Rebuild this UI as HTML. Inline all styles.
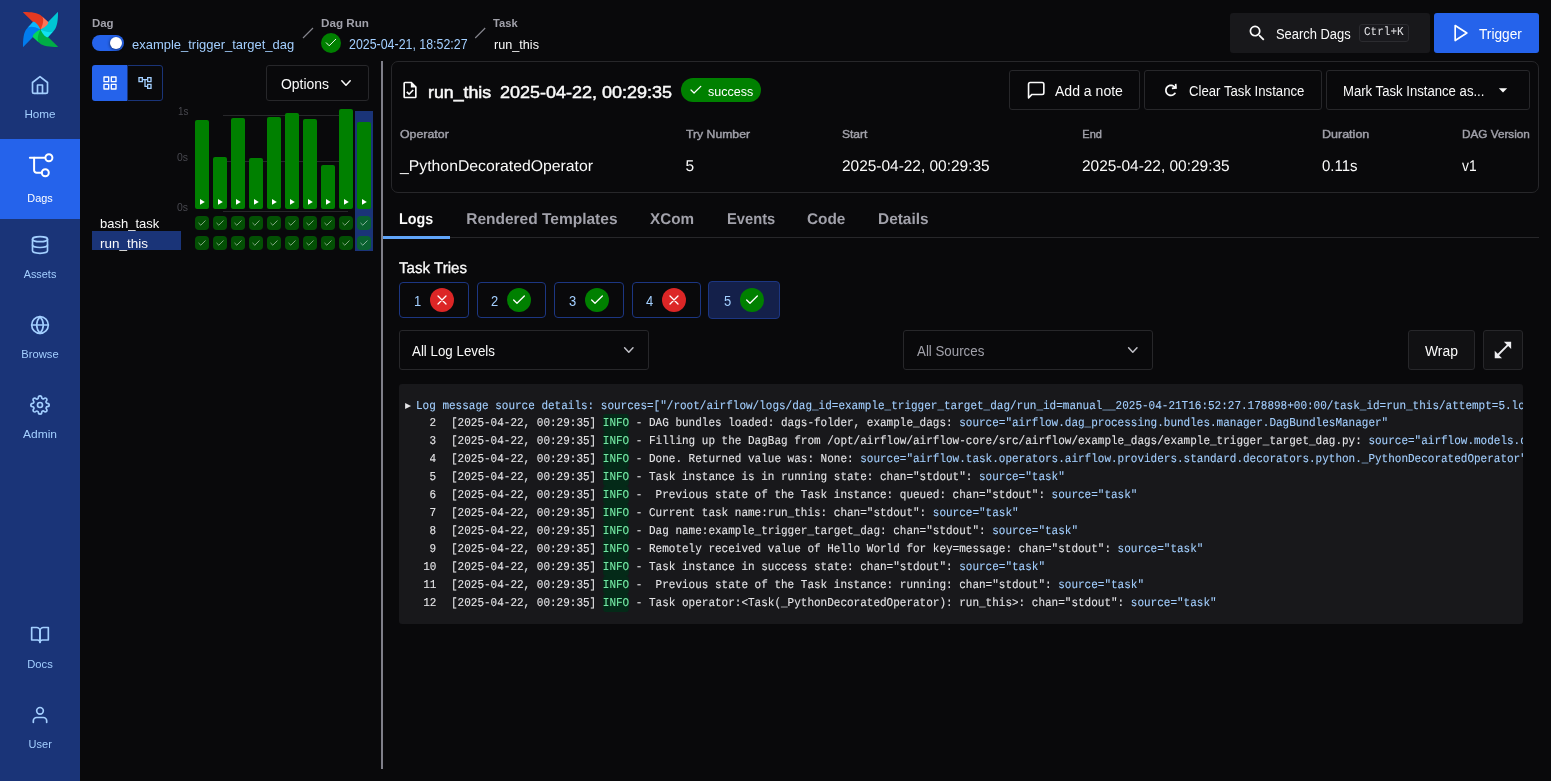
<!DOCTYPE html>
<html><head><meta charset="utf-8"><title>run_this - Airflow</title>
<style>
html,body{margin:0;padding:0;background:#09090b;}
body{width:1551px;height:781px;overflow:hidden;position:relative;font-family:"Liberation Sans",sans-serif;}
.t{position:absolute;white-space:pre;line-height:1;font-family:"Liberation Sans",sans-serif;}
.b{position:absolute;box-sizing:border-box;}
svg{overflow:visible;}
.ic{fill:none;stroke:currentColor;stroke-width:2;stroke-linecap:round;stroke-linejoin:round;}
</style></head><body><div id="w" style="position:absolute;left:0;top:0;width:1551px;height:781px;will-change:transform;">

<div class="b" style="left:0px;top:0px;width:80px;height:781px;background:#1a3478;"></div>
<div class="b" style="left:0px;top:139px;width:80px;height:80px;background:#2563eb;"></div>
<svg class="b" style="left:23px;top:12px;" width="35" height="35" viewBox="0 0 155.314 155.314"><path d="M1.936 154.575l74.924-76.8a1.374 1.374 0 00.171-1.754c-4.556-6.361-12.963-7.464-16.079-11.738-9.229-12.66-11.571-19.826-15.537-19.382a1.218 1.218 0 00-.728.385L17.621 73.03C2.05 88.981-.185 124.1.008 153.729a1.122 1.122 0 001.928.846z" fill="#017cee"/>
<path d="M154.566 153.37l-76.8-74.925a1.372 1.372 0 00-1.754-.171c-6.361 4.557-7.464 12.963-11.738 16.079-12.66 9.229-19.826 11.571-19.382 15.537a1.223 1.223 0 00.385.727l27.744 27.066c15.951 15.571 51.07 17.806 80.7 17.613a1.122 1.122 0 00.845-1.926z" fill="#00ad46"/>
<path d="M73.02 137.684c-8.718-8.506-12.757-25.331 4.636-60.029-28.275 12.637-38.183 29.456-33.31 34.211z" fill="#04d659"/>
<path d="M153.369.74L78.447 77.536a1.371 1.371 0 00-.171 1.754c4.557 6.361 12.962 7.464 16.078 11.738 9.229 12.66 11.573 19.826 15.537 19.382a1.216 1.216 0 00.728-.385l27.066-27.744c15.571-15.951 17.806-51.07 17.613-80.7a1.123 1.123 0 00-1.929-.841z" fill="#00c7d4"/>
<path d="M137.685 82.284c-8.506 8.718-25.331 12.757-60.03-4.636 12.637 28.275 29.456 38.183 34.212 33.31z" fill="#11e1ee"/>
<path d="M.741 1.937l76.8 74.922a1.373 1.373 0 001.754.171c6.361-4.557 7.464-12.963 11.738-16.079 12.66-9.229 19.826-11.571 19.382-15.537a1.221 1.221 0 00-.385-.727L82.286 17.621C66.335 2.05 31.216-.185 1.586.008a1.122 1.122 0 00-.845 1.929z" fill="#e43921"/>
<path d="M82.287 17.622c8.718 8.506 12.757 25.331-4.636 60.029 28.275-12.637 38.183-29.457 33.31-34.212z" fill="#ff7557"/>
<path d="M17.62 73.022c8.506-8.718 25.331-12.757 60.029 4.636-12.637-28.275-29.456-38.183-34.211-33.31z" fill="#0cb6ff"/>
<circle cx="77.657" cy="77.655" r="1.365" fill="#4a4848"/></svg>
<svg class="b" style="left:30px;top:75px;color:#a3cfff;" width="20" height="20" viewBox="0 0 24 24"><g class="ic"><path d="M3 9l9-7 9 7v11a2 2 0 0 1-2 2H5a2 2 0 0 1-2-2z"/><polyline points="9 22 9 12 15 12 15 22"/></g></svg>
<span class="t" style="top:109px;font-size:11px;color:#a3cfff;left:-59.80px;width:200px;text-align:center;transform:scale(1.0633,1);transform-origin:50% 9px;">Home</span>
<svg class="b" style="left:0;top:0;color:#fff;" width="1551" height="781" viewBox="0 0 1551 781"><g class="ic" style="stroke-width:2"><path d="M29.9 157.8H44.4"/><circle cx="48.9" cy="157.8" r="3.5"/><path d="M34.1 157.8V170.2a2.5 2.5 0 0 0 2.5 2.5H41.8"/><circle cx="45.3" cy="172.7" r="3.5"/></g></svg>
<span class="t" style="top:193px;font-size:11px;color:#fff;left:-59.80px;width:200px;text-align:center;transform:scale(0.9891,1);transform-origin:50% 9px;">Dags</span>
<svg class="b" style="left:30px;top:235px;color:#a3cfff;" width="20" height="20" viewBox="0 0 24 24"><g class="ic"><ellipse cx="12" cy="5" rx="9" ry="3"/><path d="M21 12c0 1.66-4 3-9 3s-9-1.34-9-3"/><path d="M3 5v14c0 1.66 4 3 9 3s9-1.34 9-3V5"/></g></svg>
<span class="t" style="top:269px;font-size:11px;color:#a3cfff;left:-59.80px;width:200px;text-align:center;transform:scale(0.9906,1);transform-origin:50% 9px;">Assets</span>
<svg class="b" style="left:30px;top:315px;color:#a3cfff;" width="20" height="20" viewBox="0 0 24 24"><g class="ic"><circle cx="12" cy="12" r="10"/><line x1="2" y1="12" x2="22" y2="12"/><path d="M12 2a15.3 15.3 0 0 1 4 10 15.3 15.3 0 0 1-4 10 15.3 15.3 0 0 1-4-10 15.3 15.3 0 0 1 4-10z"/></g></svg>
<span class="t" style="top:349px;font-size:11px;color:#a3cfff;left:-59.80px;width:200px;text-align:center;transform:scale(1.0169,1);transform-origin:50% 9px;">Browse</span>
<svg class="b" style="left:30px;top:395px;color:#a3cfff;" width="20" height="20" viewBox="0 0 24 24"><g class="ic"><circle cx="12" cy="12" r="3"/><path d="M19.4 15a1.65 1.65 0 0 0 .33 1.82l.06.06a2 2 0 0 1 0 2.83 2 2 0 0 1-2.83 0l-.06-.06a1.65 1.65 0 0 0-1.82-.33 1.65 1.65 0 0 0-1 1.51V21a2 2 0 0 1-2 2 2 2 0 0 1-2-2v-.09A1.65 1.65 0 0 0 9 19.4a1.65 1.65 0 0 0-1.82.33l-.06.06a2 2 0 0 1-2.83 0 2 2 0 0 1 0-2.83l.06-.06a1.65 1.65 0 0 0 .33-1.82 1.65 1.65 0 0 0-1.51-1H3a2 2 0 0 1-2-2 2 2 0 0 1 2-2h.09A1.65 1.65 0 0 0 4.6 9a1.65 1.65 0 0 0-.33-1.82l-.06-.06a2 2 0 0 1 0-2.83 2 2 0 0 1 2.83 0l.06.06a1.65 1.65 0 0 0 1.82.33H9a1.65 1.65 0 0 0 1-1.51V3a2 2 0 0 1 2-2 2 2 0 0 1 2 2v.09a1.65 1.65 0 0 0 1 1.51 1.65 1.65 0 0 0 1.82-.33l.06-.06a2 2 0 0 1 2.83 0 2 2 0 0 1 0 2.83l-.06.06a1.65 1.65 0 0 0-.33 1.82V9a1.65 1.65 0 0 0 1.51 1H21a2 2 0 0 1 2 2 2 2 0 0 1-2 2h-.09a1.65 1.65 0 0 0-1.51 1z"/></g></svg>
<span class="t" style="top:429px;font-size:11px;color:#a3cfff;left:-59.80px;width:200px;text-align:center;transform:scale(1.0905,1);transform-origin:50% 9px;">Admin</span>
<svg class="b" style="left:30px;top:625px;color:#a3cfff;" width="20" height="20" viewBox="0 0 24 24"><g class="ic"><path d="M2 3h6a4 4 0 0 1 4 4v14a3 3 0 0 0-3-3H2z"/><path d="M22 3h-6a4 4 0 0 0-4 4v14a3 3 0 0 1 3-3h7z"/></g></svg>
<span class="t" style="top:659px;font-size:11px;color:#a3cfff;left:-59.80px;width:200px;text-align:center;transform:scale(1.0175,1);transform-origin:50% 9px;">Docs</span>
<svg class="b" style="left:30px;top:705px;color:#a3cfff;" width="20" height="20" viewBox="0 0 24 24"><g class="ic"><path d="M20 21v-2a4 4 0 0 0-4-4H8a4 4 0 0 0-4 4v2"/><circle cx="12" cy="7" r="4"/></g></svg>
<span class="t" style="top:739px;font-size:11px;color:#a3cfff;left:-59.80px;width:200px;text-align:center;">User</span>
<span class="t" style="top:18px;font-size:11px;color:#a1a1aa;left:92.20px;transform:scale(1.0394,1);transform-origin:0 9px;font-weight:700;">Dag</span>
<div class="b" style="left:92px;top:35px;width:32px;height:16px;background:#2563eb;border-radius:8px;"></div>
<div class="b" style="left:110px;top:37px;width:12px;height:12px;background:#fff;border-radius:6px;box-shadow:0 1px 3px rgba(0,0,0,0.4),-1px 0 3px rgba(0,0,0,0.2);"></div>
<span class="t" style="top:38px;font-size:13.5px;color:#a3cfff;left:132.40px;transform:scale(0.9605,1);transform-origin:0 11px;">example_trigger_target_dag</span>
<svg class="b" style="left:0;top:0;" width="1551" height="781" viewBox="0 0 1551 781"><path d="M303 38L313 28M475.2 38L485.2 28" stroke="#85858d" stroke-width="1.15" fill="none"/></svg>
<span class="t" style="top:18px;font-size:11px;color:#a1a1aa;left:320.50px;transform:scale(1.0615,1);transform-origin:0 9px;font-weight:700;">Dag Run</span>
<div class="b" style="left:321px;top:33px;width:20px;height:20px;background:#008000;border-radius:10px;"></div>
<svg class="b" style="left:0;top:0;" width="1551" height="781" viewBox="0 0 1551 781"><polyline points="335.72,39.26 329.23,45.75 326.28,42.80" fill="none" stroke="rgba(255,255,255,0.95)" stroke-width="1.0" stroke-linecap="round" stroke-linejoin="round"/></svg>
<span class="t" style="top:37px;font-size:14px;color:#a3cfff;left:348.60px;transform:scale(0.8858,1);transform-origin:0 12px;">2025-04-21, 18:52:27</span>
<span class="t" style="top:18px;font-size:11px;color:#a1a1aa;left:493.40px;transform:scale(1.0142,1);transform-origin:0 9px;font-weight:700;">Task</span>
<span class="t" style="top:38px;font-size:13.5px;color:#fafafa;left:493.70px;transform:scale(0.9370,1);transform-origin:0 11px;">run_this</span>
<div class="b" style="left:1230px;top:13px;width:200px;height:40px;background:#18181b;border-radius:3px;"></div>
<svg class="b" style="left:1246.55px;top:22.65px;color:#fafafa;" width="20.4" height="20.4" viewBox="0 0 24 24"><path fill="currentColor" d="M15.5 14h-.79l-.28-.27A6.471 6.471 0 0 0 16 9.5 6.5 6.5 0 1 0 9.5 16c1.61 0 3.09-.59 4.23-1.57l.27.28v.79l5 4.99L20.49 19l-4.99-5zm-6 0C7.01 14 5 11.99 5 9.5S7.01 5 9.5 5 14 7.01 14 9.5 11.99 14 9.5 14z"/></svg>
<span class="t" style="top:27px;font-size:14px;color:#fafafa;left:1275.60px;transform:scale(0.9230,1);transform-origin:0 12px;">Search Dags</span>
<div class="b" style="left:1359px;top:24px;width:50px;height:18px;border:1px solid #2c2c30;border-radius:3px;background:#1a1a1e;"></div>
<span class="t" style="top:26px;font-size:12px;color:#e4e4e7;left:1364.00px;transform:scale(0.9165,1);transform-origin:0 9px;font-family:'Liberation Mono',monospace;text-rendering:geometricPrecision;">Ctrl+K</span>
<div class="b" style="left:1434px;top:13px;width:105px;height:40px;background:#2563eb;border-radius:3px;"></div>
<svg class="b" style="left:1450.5px;top:23.1px;color:#fff;" width="20" height="20" viewBox="0 0 24 24"><polygon class="ic" points="5 3 19 12 5 21 5 3"/></svg>
<span class="t" style="top:27px;font-size:14px;color:#fff;left:1479.10px;transform:scale(0.9766,1);transform-origin:0 12px;">Trigger</span>
<div class="b" style="left:92px;top:65px;width:35px;height:36px;background:#2563eb;border-radius:3px 0 0 3px;"></div>
<div class="b" style="left:127px;top:65px;width:36px;height:36px;border:1px solid #1a3478;border-radius:0 3px 3px 0;"></div>
<svg class="b" style="left:102px;top:75px;color:#fff;" width="16" height="16" viewBox="0 0 24 24"><g class="ic"><rect x="3" y="3" width="7" height="7"/><rect x="14" y="3" width="7" height="7"/><rect x="14" y="14" width="7" height="7"/><rect x="3" y="14" width="7" height="7"/></g></svg>
<svg class="b" style="left:137.2px;top:75px;color:#a3cfff;" width="16" height="16" viewBox="0 0 24 24"><path fill="currentColor" d="M22 11V3h-7v3H9V3H2v8h7V8h2v10h4v3h7v-8h-7v3h-2V8h2v3h7zM7 9H4V5h3v4zm10 6h3v4h-3v-4zm0-10h3v4h-3V5z"/></svg>
<div class="b" style="left:266px;top:65px;width:103px;height:36px;border:1px solid #27272a;border-radius:3px;"></div>
<span class="t" style="top:77px;font-size:14px;color:#fafafa;left:281.30px;transform:scale(0.9969,1);transform-origin:0 12px;">Options</span>
<svg class="b" style="left:0;top:0;color:#fafafa;" width="1551" height="781" viewBox="0 0 1551 781"><polyline class="ic" points="341.8 80.7 346 85.2 350.2 80.7" style="stroke-width:1.5"/></svg>
<span class="t" style="top:107px;font-size:10px;color:#48484f;left:177.70px;transform:scale(0.9942,1);transform-origin:0 8px;">1s</span>
<span class="t" style="top:153px;font-size:10px;color:#48484f;left:176.90px;transform:scale(1.0415,1);transform-origin:0 8px;">0s</span>
<span class="t" style="top:203px;font-size:10px;color:#48484f;left:176.90px;transform:scale(1.0415,1);transform-origin:0 8px;">0s</span>
<div class="b" style="left:223px;top:115px;width:125px;height:1px;background:#27272a;"></div>
<div class="b" style="left:223px;top:161px;width:125px;height:1px;background:#27272a;"></div>
<div class="b" style="left:223px;top:211px;width:125px;height:1px;background:#27272a;"></div>
<div class="b" style="left:355px;top:111px;width:18px;height:140px;background:#1a3478;"></div>
<div class="b" style="left:195px;top:120px;width:14px;height:89px;background:#008000;border-radius:2px;"></div>
<svg class="b" style="left:199.9px;top:199.3px;" width="4.8" height="5.8" viewBox="0 0 5 6"><path d="M0 0L5 3L0 6z" fill="#fff"/></svg>
<div class="b" style="left:195px;top:216px;width:14px;height:14px;background:rgba(0,128,0,0.6);border-radius:4px;"></div>
<svg class="b" style="left:0;top:0;" width="1551" height="781" viewBox="0 0 1551 781"><polyline points="205.20,220.80 200.80,225.20 198.80,223.20" fill="none" stroke="rgba(255,255,255,0.5)" stroke-width="1" stroke-linecap="round" stroke-linejoin="round"/></svg>
<div class="b" style="left:195px;top:236px;width:14px;height:14px;background:rgba(0,128,0,0.6);border-radius:4px;"></div>
<svg class="b" style="left:0;top:0;" width="1551" height="781" viewBox="0 0 1551 781"><polyline points="205.20,240.80 200.80,245.20 198.80,243.20" fill="none" stroke="rgba(255,255,255,0.5)" stroke-width="1" stroke-linecap="round" stroke-linejoin="round"/></svg>
<div class="b" style="left:213px;top:157px;width:14px;height:52px;background:#008000;border-radius:2px;"></div>
<svg class="b" style="left:217.9px;top:199.3px;" width="4.8" height="5.8" viewBox="0 0 5 6"><path d="M0 0L5 3L0 6z" fill="#fff"/></svg>
<div class="b" style="left:213px;top:216px;width:14px;height:14px;background:rgba(0,128,0,0.6);border-radius:4px;"></div>
<svg class="b" style="left:0;top:0;" width="1551" height="781" viewBox="0 0 1551 781"><polyline points="223.20,220.80 218.80,225.20 216.80,223.20" fill="none" stroke="rgba(255,255,255,0.5)" stroke-width="1" stroke-linecap="round" stroke-linejoin="round"/></svg>
<div class="b" style="left:213px;top:236px;width:14px;height:14px;background:rgba(0,128,0,0.6);border-radius:4px;"></div>
<svg class="b" style="left:0;top:0;" width="1551" height="781" viewBox="0 0 1551 781"><polyline points="223.20,240.80 218.80,245.20 216.80,243.20" fill="none" stroke="rgba(255,255,255,0.5)" stroke-width="1" stroke-linecap="round" stroke-linejoin="round"/></svg>
<div class="b" style="left:231px;top:118px;width:14px;height:91px;background:#008000;border-radius:2px;"></div>
<svg class="b" style="left:235.9px;top:199.3px;" width="4.8" height="5.8" viewBox="0 0 5 6"><path d="M0 0L5 3L0 6z" fill="#fff"/></svg>
<div class="b" style="left:231px;top:216px;width:14px;height:14px;background:rgba(0,128,0,0.6);border-radius:4px;"></div>
<svg class="b" style="left:0;top:0;" width="1551" height="781" viewBox="0 0 1551 781"><polyline points="241.20,220.80 236.80,225.20 234.80,223.20" fill="none" stroke="rgba(255,255,255,0.5)" stroke-width="1" stroke-linecap="round" stroke-linejoin="round"/></svg>
<div class="b" style="left:231px;top:236px;width:14px;height:14px;background:rgba(0,128,0,0.6);border-radius:4px;"></div>
<svg class="b" style="left:0;top:0;" width="1551" height="781" viewBox="0 0 1551 781"><polyline points="241.20,240.80 236.80,245.20 234.80,243.20" fill="none" stroke="rgba(255,255,255,0.5)" stroke-width="1" stroke-linecap="round" stroke-linejoin="round"/></svg>
<div class="b" style="left:249px;top:158px;width:14px;height:51px;background:#008000;border-radius:2px;"></div>
<svg class="b" style="left:253.9px;top:199.3px;" width="4.8" height="5.8" viewBox="0 0 5 6"><path d="M0 0L5 3L0 6z" fill="#fff"/></svg>
<div class="b" style="left:249px;top:216px;width:14px;height:14px;background:rgba(0,128,0,0.6);border-radius:4px;"></div>
<svg class="b" style="left:0;top:0;" width="1551" height="781" viewBox="0 0 1551 781"><polyline points="259.20,220.80 254.80,225.20 252.80,223.20" fill="none" stroke="rgba(255,255,255,0.5)" stroke-width="1" stroke-linecap="round" stroke-linejoin="round"/></svg>
<div class="b" style="left:249px;top:236px;width:14px;height:14px;background:rgba(0,128,0,0.6);border-radius:4px;"></div>
<svg class="b" style="left:0;top:0;" width="1551" height="781" viewBox="0 0 1551 781"><polyline points="259.20,240.80 254.80,245.20 252.80,243.20" fill="none" stroke="rgba(255,255,255,0.5)" stroke-width="1" stroke-linecap="round" stroke-linejoin="round"/></svg>
<div class="b" style="left:267px;top:117px;width:14px;height:92px;background:#008000;border-radius:2px;"></div>
<svg class="b" style="left:271.9px;top:199.3px;" width="4.8" height="5.8" viewBox="0 0 5 6"><path d="M0 0L5 3L0 6z" fill="#fff"/></svg>
<div class="b" style="left:267px;top:216px;width:14px;height:14px;background:rgba(0,128,0,0.6);border-radius:4px;"></div>
<svg class="b" style="left:0;top:0;" width="1551" height="781" viewBox="0 0 1551 781"><polyline points="277.20,220.80 272.80,225.20 270.80,223.20" fill="none" stroke="rgba(255,255,255,0.5)" stroke-width="1" stroke-linecap="round" stroke-linejoin="round"/></svg>
<div class="b" style="left:267px;top:236px;width:14px;height:14px;background:rgba(0,128,0,0.6);border-radius:4px;"></div>
<svg class="b" style="left:0;top:0;" width="1551" height="781" viewBox="0 0 1551 781"><polyline points="277.20,240.80 272.80,245.20 270.80,243.20" fill="none" stroke="rgba(255,255,255,0.5)" stroke-width="1" stroke-linecap="round" stroke-linejoin="round"/></svg>
<div class="b" style="left:285px;top:113px;width:14px;height:96px;background:#008000;border-radius:2px;"></div>
<svg class="b" style="left:289.9px;top:199.3px;" width="4.8" height="5.8" viewBox="0 0 5 6"><path d="M0 0L5 3L0 6z" fill="#fff"/></svg>
<div class="b" style="left:285px;top:216px;width:14px;height:14px;background:rgba(0,128,0,0.6);border-radius:4px;"></div>
<svg class="b" style="left:0;top:0;" width="1551" height="781" viewBox="0 0 1551 781"><polyline points="295.20,220.80 290.80,225.20 288.80,223.20" fill="none" stroke="rgba(255,255,255,0.5)" stroke-width="1" stroke-linecap="round" stroke-linejoin="round"/></svg>
<div class="b" style="left:285px;top:236px;width:14px;height:14px;background:rgba(0,128,0,0.6);border-radius:4px;"></div>
<svg class="b" style="left:0;top:0;" width="1551" height="781" viewBox="0 0 1551 781"><polyline points="295.20,240.80 290.80,245.20 288.80,243.20" fill="none" stroke="rgba(255,255,255,0.5)" stroke-width="1" stroke-linecap="round" stroke-linejoin="round"/></svg>
<div class="b" style="left:303px;top:119px;width:14px;height:90px;background:#008000;border-radius:2px;"></div>
<svg class="b" style="left:307.9px;top:199.3px;" width="4.8" height="5.8" viewBox="0 0 5 6"><path d="M0 0L5 3L0 6z" fill="#fff"/></svg>
<div class="b" style="left:303px;top:216px;width:14px;height:14px;background:rgba(0,128,0,0.6);border-radius:4px;"></div>
<svg class="b" style="left:0;top:0;" width="1551" height="781" viewBox="0 0 1551 781"><polyline points="313.20,220.80 308.80,225.20 306.80,223.20" fill="none" stroke="rgba(255,255,255,0.5)" stroke-width="1" stroke-linecap="round" stroke-linejoin="round"/></svg>
<div class="b" style="left:303px;top:236px;width:14px;height:14px;background:rgba(0,128,0,0.6);border-radius:4px;"></div>
<svg class="b" style="left:0;top:0;" width="1551" height="781" viewBox="0 0 1551 781"><polyline points="313.20,240.80 308.80,245.20 306.80,243.20" fill="none" stroke="rgba(255,255,255,0.5)" stroke-width="1" stroke-linecap="round" stroke-linejoin="round"/></svg>
<div class="b" style="left:321px;top:165px;width:14px;height:44px;background:#008000;border-radius:2px;"></div>
<svg class="b" style="left:325.9px;top:199.3px;" width="4.8" height="5.8" viewBox="0 0 5 6"><path d="M0 0L5 3L0 6z" fill="#fff"/></svg>
<div class="b" style="left:321px;top:216px;width:14px;height:14px;background:rgba(0,128,0,0.6);border-radius:4px;"></div>
<svg class="b" style="left:0;top:0;" width="1551" height="781" viewBox="0 0 1551 781"><polyline points="331.20,220.80 326.80,225.20 324.80,223.20" fill="none" stroke="rgba(255,255,255,0.5)" stroke-width="1" stroke-linecap="round" stroke-linejoin="round"/></svg>
<div class="b" style="left:321px;top:236px;width:14px;height:14px;background:rgba(0,128,0,0.6);border-radius:4px;"></div>
<svg class="b" style="left:0;top:0;" width="1551" height="781" viewBox="0 0 1551 781"><polyline points="331.20,240.80 326.80,245.20 324.80,243.20" fill="none" stroke="rgba(255,255,255,0.5)" stroke-width="1" stroke-linecap="round" stroke-linejoin="round"/></svg>
<div class="b" style="left:339px;top:109px;width:14px;height:100px;background:#008000;border-radius:2px;"></div>
<svg class="b" style="left:343.9px;top:199.3px;" width="4.8" height="5.8" viewBox="0 0 5 6"><path d="M0 0L5 3L0 6z" fill="#fff"/></svg>
<div class="b" style="left:339px;top:216px;width:14px;height:14px;background:rgba(0,128,0,0.6);border-radius:4px;"></div>
<svg class="b" style="left:0;top:0;" width="1551" height="781" viewBox="0 0 1551 781"><polyline points="349.20,220.80 344.80,225.20 342.80,223.20" fill="none" stroke="rgba(255,255,255,0.5)" stroke-width="1" stroke-linecap="round" stroke-linejoin="round"/></svg>
<div class="b" style="left:339px;top:236px;width:14px;height:14px;background:rgba(0,128,0,0.6);border-radius:4px;"></div>
<svg class="b" style="left:0;top:0;" width="1551" height="781" viewBox="0 0 1551 781"><polyline points="349.20,240.80 344.80,245.20 342.80,243.20" fill="none" stroke="rgba(255,255,255,0.5)" stroke-width="1" stroke-linecap="round" stroke-linejoin="round"/></svg>
<div class="b" style="left:357px;top:122px;width:14px;height:87px;background:#008000;border-radius:2px;"></div>
<svg class="b" style="left:361.9px;top:199.3px;" width="4.8" height="5.8" viewBox="0 0 5 6"><path d="M0 0L5 3L0 6z" fill="#fff"/></svg>
<div class="b" style="left:357px;top:216px;width:14px;height:14px;background:rgba(0,128,0,0.6);border-radius:4px;"></div>
<svg class="b" style="left:0;top:0;" width="1551" height="781" viewBox="0 0 1551 781"><polyline points="367.20,220.80 362.80,225.20 360.80,223.20" fill="none" stroke="rgba(255,255,255,0.5)" stroke-width="1" stroke-linecap="round" stroke-linejoin="round"/></svg>
<div class="b" style="left:357px;top:236px;width:14px;height:14px;background:rgba(0,128,0,0.6);border-radius:4px;"></div>
<svg class="b" style="left:0;top:0;" width="1551" height="781" viewBox="0 0 1551 781"><polyline points="367.20,240.80 362.80,245.20 360.80,243.20" fill="none" stroke="rgba(255,255,255,0.5)" stroke-width="1" stroke-linecap="round" stroke-linejoin="round"/></svg>
<div class="b" style="left:92px;top:231px;width:89px;height:19px;background:#1a3478;"></div>
<span class="t" style="top:217px;font-size:13.5px;color:#fafafa;left:100.00px;transform:scale(0.9620,1);transform-origin:0 11px;">bash_task</span>
<span class="t" style="top:237px;font-size:13.5px;color:#fafafa;left:100.00px;transform:scale(0.9973,1);transform-origin:0 11px;">run_this</span>
<div class="b" style="left:381px;top:61px;width:2px;height:708px;background:#7f7f89;"></div>
<div class="b" style="left:391px;top:61px;width:1148px;height:132px;border:1px solid #27272a;border-radius:7px;"></div>
<svg class="b" style="left:400px;top:80px;color:#fafafa;" width="20" height="20" viewBox="0 0 24 24"><path fill="currentColor" d="M14 2H6c-1.1 0-1.99.9-1.99 2L4 20c0 1.1.89 2 1.99 2H18c1.1 0 2-.9 2-2V8l-6-6zm4 18H6V4h7v5h5v11zm-9.180-6.550L7.4 14.860l3.540 3.540 5.660-5.660-1.410-1.410-4.240 4.240-2.130-2.120z"/></svg>
<span class="t" style="top:84px;font-size:17px;color:#fafafa;left:427.80px;transform:scale(1.0450,1);transform-origin:0 14px;-webkit-text-stroke:0.5px #fafafa;">run_this</span>
<span class="t" style="top:84px;font-size:17px;color:#fafafa;left:500.40px;transform:scale(1.0579,1);transform-origin:0 14px;-webkit-text-stroke:0.5px #fafafa;">2025-04-22, 00:29:35</span>
<div class="b" style="left:681px;top:78px;width:80px;height:24px;background:#008000;border-radius:12px;"></div>
<svg class="b" style="left:0;top:0;" width="1551" height="781" viewBox="0 0 1551 781"><polyline points="700.78,86.34 694.07,93.05 691.02,90.00" fill="none" stroke="#fff" stroke-width="1.25" stroke-linecap="round" stroke-linejoin="round"/></svg>
<span class="t" style="top:85px;font-size:13.5px;color:#fff;left:707.90px;transform:scale(0.9269,1);transform-origin:0 11px;">success</span>
<div class="b" style="left:1009px;top:70px;width:131px;height:40px;border:1px solid #27272a;border-radius:3px;"></div>
<div class="b" style="left:1144px;top:70px;width:178px;height:40px;border:1px solid #27272a;border-radius:3px;"></div>
<div class="b" style="left:1326px;top:70px;width:204px;height:40px;border:1px solid #27272a;border-radius:3px;"></div>
<svg class="b" style="left:1025.65px;top:79.9px;color:#fafafa;" width="20.4" height="20.4" viewBox="0 0 24 24"><path class="ic" d="M21 15a2 2 0 0 1-2 2H7l-4 4V5a2 2 0 0 1 2-2h14a2 2 0 0 1 2 2z" style="stroke-width:1.9"/></svg>
<span class="t" style="top:84px;font-size:14px;color:#fafafa;left:1054.80px;transform:scale(1.0026,1);transform-origin:0 12px;">Add a note</span>
<svg class="b" style="left:1161.4px;top:80px;color:#fafafa;" width="20" height="20" viewBox="0 0 24 24"><path fill="currentColor" d="M13.1459 11.0499L12.9716 9.05752L15.3462 8.84977C14.4471 7.98322 13.2242 7.4503 11.8769 7.4503C9.11547 7.4503 6.87689 9.68888 6.87689 12.4503C6.87689 15.2117 9.11547 17.4503 11.8769 17.4503C13.6977 17.4503 15.2911 16.4771 16.1654 15.0224L18.1682 15.5231C17.0301 17.8487 14.6405 19.4503 11.8769 19.4503C8.0109 19.4503 4.87689 16.3163 4.87689 12.4503C4.87689 8.58431 8.0109 5.4503 11.8769 5.4503C13.8233 5.4503 15.5842 6.24474 16.853 7.52706L16.6078 4.72412L18.6002 4.5498L19.1231 10.527L13.1459 11.0499Z"/></svg>
<span class="t" style="top:84px;font-size:14px;color:#fafafa;left:1189.00px;transform:scale(0.9406,1);transform-origin:0 12px;">Clear Task Instance</span>
<span class="t" style="top:84px;font-size:14px;color:#fafafa;left:1343.20px;transform:scale(0.9383,1);transform-origin:0 12px;">Mark Task Instance as...</span>
<svg class="b" style="left:1493px;top:80px;color:#fafafa;" width="20" height="20" viewBox="0 0 24 24"><path fill="currentColor" d="M7 10l5 5 5-5z"/></svg>
<span class="t" style="top:129px;font-size:11px;color:#a1a1aa;left:400.20px;transform:scale(1.1242,1);transform-origin:0 9px;-webkit-text-stroke:0.4px #a1a1aa;">Operator</span>
<span class="t" style="top:159px;font-size:15.5px;color:#fafafa;left:400.20px;transform:scale(1.0182,1);transform-origin:0 13px;text-rendering:geometricPrecision;">_PythonDecoratedOperator</span>
<span class="t" style="top:129px;font-size:11px;color:#a1a1aa;left:685.50px;transform:scale(1.1101,1);transform-origin:0 9px;-webkit-text-stroke:0.4px #a1a1aa;">Try Number</span>
<span class="t" style="top:159px;font-size:15.5px;color:#fafafa;left:685.50px;text-rendering:geometricPrecision;">5</span>
<span class="t" style="top:129px;font-size:11px;color:#a1a1aa;left:841.90px;transform:scale(1.0934,1);transform-origin:0 9px;-webkit-text-stroke:0.4px #a1a1aa;">Start</span>
<span class="t" style="top:159px;font-size:15.5px;color:#fafafa;left:841.90px;transform:scale(0.9957,1);transform-origin:0 13px;text-rendering:geometricPrecision;">2025-04-22, 00:29:35</span>
<span class="t" style="top:129px;font-size:11px;color:#a1a1aa;left:1082.30px;-webkit-text-stroke:0.4px #a1a1aa;">End</span>
<span class="t" style="top:159px;font-size:15.5px;color:#fafafa;left:1082.30px;transform:scale(0.9957,1);transform-origin:0 13px;text-rendering:geometricPrecision;">2025-04-22, 00:29:35</span>
<span class="t" style="top:129px;font-size:11px;color:#a1a1aa;left:1322.40px;transform:scale(1.1376,1);transform-origin:0 9px;-webkit-text-stroke:0.4px #a1a1aa;">Duration</span>
<span class="t" style="top:159px;font-size:15.5px;color:#fafafa;left:1322.40px;transform:scale(0.9655,1);transform-origin:0 13px;text-rendering:geometricPrecision;">0.11s</span>
<span class="t" style="top:129px;font-size:11px;color:#a1a1aa;left:1462.00px;transform:scale(1.0679,1);transform-origin:0 9px;-webkit-text-stroke:0.4px #a1a1aa;">DAG Version</span>
<span class="t" style="top:159px;font-size:15.5px;color:#fafafa;left:1462.00px;transform:scale(0.8919,1);transform-origin:0 13px;text-rendering:geometricPrecision;">v1</span>
<div class="b" style="left:383px;top:237px;width:1156px;height:1px;background:#27272a;"></div>
<div class="b" style="left:383px;top:236px;width:67px;height:3px;background:#60a5fa;"></div>
<span class="t" style="top:212px;font-size:15.5px;color:#fafafa;left:399.00px;transform:scale(0.9237,1);transform-origin:0 13px;font-weight:700;text-rendering:geometricPrecision;">Logs</span>
<span class="t" style="top:212px;font-size:15.5px;color:#a1a1aa;left:466.20px;font-weight:700;text-rendering:geometricPrecision;">Rendered Templates</span>
<span class="t" style="top:212px;font-size:15.5px;color:#a1a1aa;left:650.30px;transform:scale(0.9825,1);transform-origin:0 13px;font-weight:700;text-rendering:geometricPrecision;">XCom</span>
<span class="t" style="top:212px;font-size:15.5px;color:#a1a1aa;left:727.00px;transform:scale(0.9483,1);transform-origin:0 13px;font-weight:700;text-rendering:geometricPrecision;">Events</span>
<span class="t" style="top:212px;font-size:15.5px;color:#a1a1aa;left:807.30px;transform:scale(0.9910,1);transform-origin:0 13px;font-weight:700;text-rendering:geometricPrecision;">Code</span>
<span class="t" style="top:212px;font-size:15.5px;color:#a1a1aa;left:878.00px;transform:scale(0.9955,1);transform-origin:0 13px;font-weight:700;text-rendering:geometricPrecision;">Details</span>
<span class="t" style="top:261px;font-size:15.5px;color:#fafafa;left:399.20px;transform:scale(0.9747,1);transform-origin:0 13px;-webkit-text-stroke:0.3px #fafafa;text-rendering:geometricPrecision;">Task Tries</span>
<div class="b" style="left:399px;top:282px;width:70px;height:36px;border:1px solid #1c3682;border-radius:4px;"></div>
<span class="t" style="top:294px;font-size:14px;color:#a3cfff;left:414.40px;transform:scale(0.9247,1);transform-origin:0 12px;">1</span>
<div class="b" style="left:430px;top:288px;width:24px;height:24px;background:#dc2626;border-radius:12px;"></div>
<svg class="b" style="left:0;top:0;" width="1551" height="781" viewBox="0 0 1551 781"><path d="M438 296L446 304M446 296L438 304" stroke="#fff" stroke-width="1.3" stroke-linecap="round"/></svg>
<div class="b" style="left:477px;top:282px;width:69px;height:36px;border:1px solid #1c3682;border-radius:4px;"></div>
<span class="t" style="top:294px;font-size:14px;color:#a3cfff;left:491.40px;transform:scale(0.9247,1);transform-origin:0 12px;">2</span>
<div class="b" style="left:507px;top:288px;width:24px;height:24px;background:#008000;border-radius:12px;"></div>
<svg class="b" style="left:0;top:0;" width="1551" height="781" viewBox="0 0 1551 781"><polyline points="524.34,296.00 517.00,303.33 513.66,300.00" fill="none" stroke="#fff" stroke-width="1.3" stroke-linecap="round" stroke-linejoin="round"/></svg>
<div class="b" style="left:554px;top:282px;width:70px;height:36px;border:1px solid #1c3682;border-radius:4px;"></div>
<span class="t" style="top:294px;font-size:14px;color:#a3cfff;left:569.40px;transform:scale(0.9247,1);transform-origin:0 12px;">3</span>
<div class="b" style="left:585px;top:288px;width:24px;height:24px;background:#008000;border-radius:12px;"></div>
<svg class="b" style="left:0;top:0;" width="1551" height="781" viewBox="0 0 1551 781"><polyline points="602.34,296.00 595.00,303.33 591.66,300.00" fill="none" stroke="#fff" stroke-width="1.3" stroke-linecap="round" stroke-linejoin="round"/></svg>
<div class="b" style="left:632px;top:282px;width:69px;height:36px;border:1px solid #1c3682;border-radius:4px;"></div>
<span class="t" style="top:294px;font-size:14px;color:#a3cfff;left:646.40px;transform:scale(0.9247,1);transform-origin:0 12px;">4</span>
<div class="b" style="left:662px;top:288px;width:24px;height:24px;background:#dc2626;border-radius:12px;"></div>
<svg class="b" style="left:0;top:0;" width="1551" height="781" viewBox="0 0 1551 781"><path d="M670 296L678 304M678 296L670 304" stroke="#fff" stroke-width="1.3" stroke-linecap="round"/></svg>
<div class="b" style="left:708px;top:281px;width:72px;height:38px;background:#14204a;border:1px solid #1c3682;border-radius:4px;"></div>
<span class="t" style="top:294px;font-size:14px;color:#a3cfff;left:724.40px;transform:scale(0.9247,1);transform-origin:0 12px;">5</span>
<div class="b" style="left:740px;top:288px;width:24px;height:24px;background:#008000;border-radius:12px;"></div>
<svg class="b" style="left:0;top:0;" width="1551" height="781" viewBox="0 0 1551 781"><polyline points="757.34,296.00 750.00,303.33 746.66,300.00" fill="none" stroke="#fff" stroke-width="1.3" stroke-linecap="round" stroke-linejoin="round"/></svg>
<div class="b" style="left:399px;top:330px;width:250px;height:40px;border:1px solid #27272a;border-radius:3px;"></div>
<span class="t" style="top:344px;font-size:14px;color:#fafafa;left:412.30px;transform:scale(0.9522,1);transform-origin:0 12px;">All Log Levels</span>
<div class="b" style="left:903px;top:330px;width:250px;height:40px;border:1px solid #27272a;border-radius:3px;"></div>
<span class="t" style="top:344px;font-size:14px;color:#a1a1aa;left:916.60px;transform:scale(0.9505,1);transform-origin:0 12px;">All Sources</span>
<svg class="b" style="left:0;top:0;color:#c0c0c7;" width="1551" height="781" viewBox="0 0 1551 781"><g class="ic" style="stroke-width:1.5"><polyline points="624.6 347.8 628.8 352.2 633 347.8"/><polyline points="1128.6 347.8 1132.8 352.2 1137 347.8"/></g></svg>
<div class="b" style="left:1408px;top:330px;width:67px;height:40px;border:1px solid #27272a;border-radius:3px;background:#111113;"></div>
<span class="t" style="top:344px;font-size:14px;color:#fafafa;left:1424.90px;transform:scale(0.9911,1);transform-origin:0 12px;">Wrap</span>
<div class="b" style="left:1483px;top:330px;width:40px;height:40px;border:1px solid #27272a;border-radius:3px;background:#111113;"></div>
<svg class="b" style="left:1492.0px;top:339.0px;color:#ededf0;" width="21.9" height="21.9" viewBox="0 0 24 24"><path fill="currentColor" d="M21 11V3h-8l3.290 3.290-10 10L3 13v8h8l-3.290-3.290 10-10z"/></svg>
<div class="b" style="left:399px;top:384px;width:1124px;height:240px;background:#18181b;border-radius:3px;overflow:hidden;">
<style>.m{font-family:"Liberation Mono",monospace;font-size:12px;color:#e4e4e7;text-rendering:geometricPrecision;-webkit-text-stroke:0.1px;transform:scale(0.9165,1);transform-origin:0 9px;}.mr{transform-origin:100% 9px;}</style>
<svg class="b" style="left:5.8px;top:18.7px;" width="6.2" height="6" viewBox="0 0 6 6"><path d="M0 0L6 3L0 6z" fill="#e4e4e7"/></svg>
<span class="t m" style="left:16.7px;top:16px;color:#a3cfff">Log message source details: sources=["/root/airflow/logs/dag_id=example_trigger_target_dag/run_id=manual__2025-04-21T16:52:27.178898+00:00/task_id=run_this/attempt=5.log"]</span>
<span class="t m mr" style="right:1086.70px;top:33px;">2</span>
<span class="t m" style="left:52.2px;top:33px;">[2025-04-22, 00:29:35] <span style="color:#74e8a4;background:#042a18;border-radius:3px;padding:2px 0 2px;">INFO</span> - DAG bundles loaded: dags-folder, example_dags: <span style="color:#a3cfff">source="airflow.dag_processing.bundles.manager.DagBundlesManager"</span></span>
<span class="t m mr" style="right:1086.70px;top:51px;">3</span>
<span class="t m" style="left:52.2px;top:51px;">[2025-04-22, 00:29:35] <span style="color:#74e8a4;background:#042a18;border-radius:3px;padding:2px 0 2px;">INFO</span> - Filling up the DagBag from /opt/airflow/airflow-core/src/airflow/example_dags/example_trigger_target_dag.py: <span style="color:#a3cfff">source="airflow.models.dagbag.DagBag"</span></span>
<span class="t m mr" style="right:1086.70px;top:69px;">4</span>
<span class="t m" style="left:52.2px;top:69px;">[2025-04-22, 00:29:35] <span style="color:#74e8a4;background:#042a18;border-radius:3px;padding:2px 0 2px;">INFO</span> - Done. Returned value was: None: <span style="color:#a3cfff">source="airflow.task.operators.airflow.providers.standard.decorators.python._PythonDecoratedOperator"</span></span>
<span class="t m mr" style="right:1086.70px;top:87px;">5</span>
<span class="t m" style="left:52.2px;top:87px;">[2025-04-22, 00:29:35] <span style="color:#74e8a4;background:#042a18;border-radius:3px;padding:2px 0 2px;">INFO</span> - Task instance is in running state: chan="stdout": <span style="color:#a3cfff">source="task"</span></span>
<span class="t m mr" style="right:1086.70px;top:105px;">6</span>
<span class="t m" style="left:52.2px;top:105px;">[2025-04-22, 00:29:35] <span style="color:#74e8a4;background:#042a18;border-radius:3px;padding:2px 0 2px;">INFO</span> -  Previous state of the Task instance: queued: chan="stdout": <span style="color:#a3cfff">source="task"</span></span>
<span class="t m mr" style="right:1086.70px;top:123px;">7</span>
<span class="t m" style="left:52.2px;top:123px;">[2025-04-22, 00:29:35] <span style="color:#74e8a4;background:#042a18;border-radius:3px;padding:2px 0 2px;">INFO</span> - Current task name:run_this: chan="stdout": <span style="color:#a3cfff">source="task"</span></span>
<span class="t m mr" style="right:1086.70px;top:141px;">8</span>
<span class="t m" style="left:52.2px;top:141px;">[2025-04-22, 00:29:35] <span style="color:#74e8a4;background:#042a18;border-radius:3px;padding:2px 0 2px;">INFO</span> - Dag name:example_trigger_target_dag: chan="stdout": <span style="color:#a3cfff">source="task"</span></span>
<span class="t m mr" style="right:1086.70px;top:159px;">9</span>
<span class="t m" style="left:52.2px;top:159px;">[2025-04-22, 00:29:35] <span style="color:#74e8a4;background:#042a18;border-radius:3px;padding:2px 0 2px;">INFO</span> - Remotely received value of Hello World for key=message: chan="stdout": <span style="color:#a3cfff">source="task"</span></span>
<span class="t m mr" style="right:1086.70px;top:177px;">10</span>
<span class="t m" style="left:52.2px;top:177px;">[2025-04-22, 00:29:35] <span style="color:#74e8a4;background:#042a18;border-radius:3px;padding:2px 0 2px;">INFO</span> - Task instance in success state: chan="stdout": <span style="color:#a3cfff">source="task"</span></span>
<span class="t m mr" style="right:1086.70px;top:195px;">11</span>
<span class="t m" style="left:52.2px;top:195px;">[2025-04-22, 00:29:35] <span style="color:#74e8a4;background:#042a18;border-radius:3px;padding:2px 0 2px;">INFO</span> -  Previous state of the Task instance: running: chan="stdout": <span style="color:#a3cfff">source="task"</span></span>
<span class="t m mr" style="right:1086.70px;top:213px;">12</span>
<span class="t m" style="left:52.2px;top:213px;">[2025-04-22, 00:29:35] <span style="color:#74e8a4;background:#042a18;border-radius:3px;padding:2px 0 2px;">INFO</span> - Task operator:&lt;Task(_PythonDecoratedOperator): run_this&gt;: chan="stdout": <span style="color:#a3cfff">source="task"</span></span>
</div>
</div></body></html>
